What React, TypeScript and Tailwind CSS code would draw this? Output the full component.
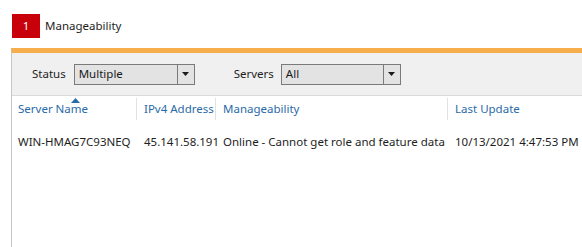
const columns = [
  { title: "Server Name", width: "w-[125px]", sorted: true },
  { title: "IPv4 Address", width: "w-[79px]", sorted: false },
  { title: "Manageability", width: "w-[232px]", sorted: false },
  { title: "Last Update", width: "flex-1", sorted: false },
];

const row = [
  "WIN-HMAG7C93NEQ",
  "45.141.58.191",
  "Online - Cannot get role and feature data",
  "10/13/2021 4:47:53 PM",
];

const Dropdown = ({ value, width }: { value: string; width: string }) => {
  return (
    <div className={`flex h-[21px] ${width} items-stretch border border-[#7a7a7a] bg-[#e3e3e3]`}>
      <div className="flex flex-1 items-center pl-[4px] text-[11.5px] text-[#1a1a1a]">
        {value}
      </div>
      <div className="flex w-[17px] items-center justify-center border-l border-[#7a7a7a]">
        <svg width="7" height="4" viewBox="0 0 7 4">
          <path d="M0 0 H7 L3.5 4 Z" fill="#1a1a1a" />
        </svg>
      </div>
    </div>
  );
};

const App = () => {
  return (
    <div
      className="h-[247px] w-[582px] overflow-hidden bg-white text-[#1e1e1e]"
      style={{ fontFamily: '"Noto Sans", "Open Sans", sans-serif' }}
    >

      {/* Title */}

      <div className="flex items-center pl-[12px] pt-[14px]">
        <div className="flex h-[24px] w-[28px] items-center justify-center bg-[#c8000a] text-[11.5px] text-white">
          1
        </div>
        <span className="ml-[5px] text-[11.5px]">Manageability</span>
      </div>

      {/* Panel */}

      <div className="ml-[11px] mt-[10px] h-[200px] border-l border-t-[5px] border-l-[#c6c6c6] border-t-[#f6ae4c]">

        {/* Filters */}

        <div className="flex h-[43px] items-center border-b border-[#dadada] bg-[#f0f0f0] pl-[20px]">
          <span className="text-[11.5px]">Status</span>
          <div className="ml-[8px]">
            <Dropdown value="Multiple" width="w-[121px]" />
          </div>
          <span className="ml-[39px] text-[11.5px]">Servers</span>
          <div className="ml-[7px]">
            <Dropdown value="All" width="w-[120px]" />
          </div>
        </div>

        {/* Header */}

        <div className="flex h-[24px] pt-[2px]">
          {columns.map((col, i) => (
            <div
              key={col.title}
              className={`relative flex items-center whitespace-nowrap ${col.width} ${i < 3 ? "border-r border-[#e2e2e2]" : ""} ${i === 0 ? "pl-[6px]" : "pl-[7px]"} text-[11.5px] text-[#2a6aa8]`}
            >
              {col.sorted && (
                <svg className="absolute left-[59px] top-[0px]" width="9" height="5" viewBox="0 0 9 5">
                  <path d="M0 5 L4.5 0 L9 5 Z" fill="#2a6aa8" />
                </svg>
              )}
              {col.title}
            </div>
          ))}
        </div>

        {/* Rows */}

        <div className="flex pt-[13px] text-[11.5px]">
          {row.map((cell, i) => (
            <div key={i} className={`${columns[i].width} whitespace-nowrap ${i === 0 ? "pl-[6px]" : "pl-[7px]"}`}>
              {cell}
            </div>
          ))}
        </div>

      </div>

    </div>
  );
};

export default App;
